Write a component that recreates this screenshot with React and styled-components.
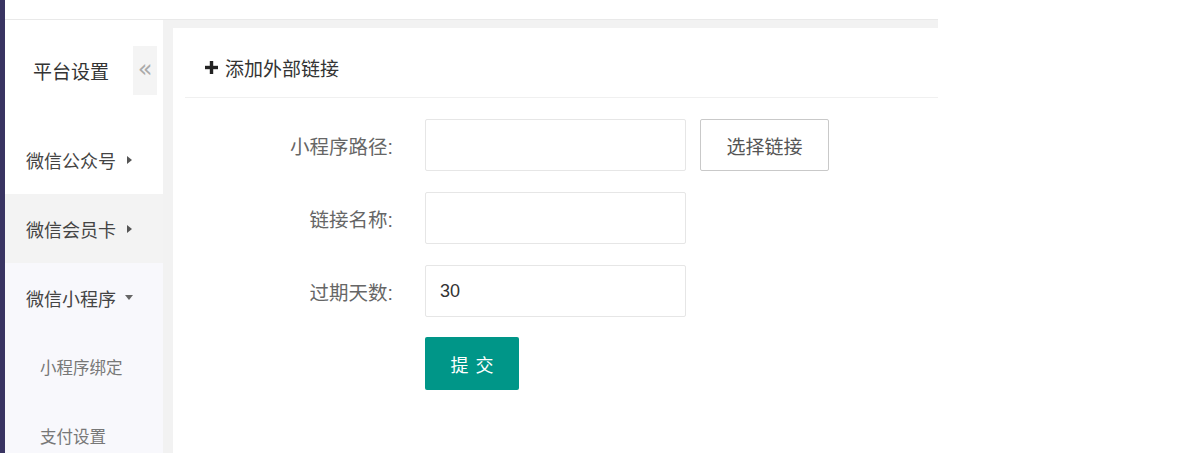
import styled, { createGlobalStyle } from "styled-components";

const GlobalStyle = createGlobalStyle`
    html, body {
        margin: 0;
        padding: 0;
        background: #fff;
    }
    body {
        font-family: "Liberation Sans", "Noto Sans CJK SC", sans-serif;
        color: #333;
    }
    * {
        box-sizing: border-box;
    }
`;

const Page = styled.div`
    display: flex;
    height: 453px;
    overflow: hidden;
`;
const DarkBar = styled.div`
    width: 5px;
    background: #393462;
    flex-shrink: 0;
`;
const Main = styled.div`
    width: 933px;
    display: flex;
    flex-direction: column;
`;
const TopBar = styled.div`
    height: 20px;
    background: #fff;
    border-bottom: 1px solid #e9e9e9;
    flex-shrink: 0;
`;
const Body = styled.div`
    flex: 1;
    display: flex;
    min-height: 0;
`;
const Sidebar = styled.div`
    width: 158px;
    background: #fff;
    display: flex;
    flex-direction: column;
    flex-shrink: 0;
    overflow: hidden;
`;
const SideHead = styled.div`
    display: flex;
    align-items: flex-start;
    padding: 26px 6px 0 28px;
    height: 105px;
    flex-shrink: 0;
`;
const SideTitle = styled.div`
    font-size: 19px;
    color: #333;
    line-height: 49px;
    padding-top: 2px;
`;
const Collapse = styled.div`
    margin-left: auto;
    width: 24px;
    height: 49px;
    background: #f4f4f4;
    color: #aaa;
    font-family: "DejaVu Sans", sans-serif;
    font-size: 24px;
    display: flex;
    align-items: center;
    justify-content: center;
    padding-bottom: 3px;
`;
const MenuItem = styled.div`
    height: 69px;
    flex-shrink: 0;
    display: flex;
    align-items: center;
    gap: 9px;
    padding-left: ${(props) => (props.sub ? "35px" : "21px")};
    font-size: ${(props) => (props.sub ? "16.5px" : "18px")};
    color: ${(props) => (props.sub ? "#777" : "#444")};
    background: ${(props) => props.bg || "#fff"};
`;
const ArrowRight = styled.span`
    width: 0;
    height: 0;
    border-top: 4px solid transparent;
    border-bottom: 4px solid transparent;
    border-left: 5px solid #555;
    margin-left: 2px;
`;
const ArrowDown = styled.span`
    width: 0;
    height: 0;
    border-left: 4.5px solid transparent;
    border-right: 4.5px solid transparent;
    border-top: 5px solid #666;
`;
const Content = styled.div`
    flex: 1;
    background: #f2f2f2;
    padding: 8px 0 0 10px;
    display: flex;
`;
const Card = styled.div`
    flex: 1;
    background: #fff;
    padding-left: 12px;
`;
const CardHead = styled.div`
    height: 70px;
    border-bottom: 1px solid #f0f0f0;
    display: flex;
    align-items: center;
    gap: 7px;
    padding: 10px 0 0 20px;
    font-size: 19px;
    color: #333;
`;
const Form = styled.div`
    padding-top: 21px;
    display: grid;
    grid-template-columns: 210px 261px auto;
    column-gap: 30px;
    row-gap: 21px;
    justify-content: start;
    align-items: center;
`;
const Label = styled.div`
    text-align: right;
    font-size: 19.5px;
    color: #666;
    padding-right: 2px;
`;
const Input = styled.div`
    height: 52px;
    border: 1px solid #e6e6e6;
    border-radius: 2px;
    padding-left: 14px;
    display: flex;
    align-items: center;
    font-size: 18px;
    color: #333;
`;
const Extra = styled.div`
    margin-left: -16px;
`;
const LinkButton = styled.div`
    width: 129px;
    height: 52px;
    border: 1px solid #c9c9c9;
    border-radius: 2px;
    display: flex;
    align-items: center;
    justify-content: center;
    font-size: 19px;
    color: #555;
`;
const Submit = styled.div`
    width: 94px;
    height: 53px;
    margin-top: -1px;
    background: #009688;
    border-radius: 2px;
    color: #fff;
    font-size: 18px;
    display: flex;
    align-items: center;
    justify-content: center;
    letter-spacing: 7px;
    padding-left: 7px;
`;

const Plus = () => (
    <svg width="13" height="13" viewBox="0 0 13 13">
        <rect x="4.8" y="0" width="3.4" height="13" fill="#222" />
        <rect x="0" y="4.8" width="13" height="3.4" fill="#222" />
    </svg>
);

const App = () => {
    return (
        <Page>
            <GlobalStyle />
            <DarkBar />
            <Main>
                <TopBar />
                <Body>
                    <Sidebar>
                        <SideHead>
                            <SideTitle>平台设置</SideTitle>
                            <Collapse>«</Collapse>
                        </SideHead>
                        <MenuItem>微信公众号<ArrowRight /></MenuItem>
                        <MenuItem bg="#f3f3f3">微信会员卡<ArrowRight /></MenuItem>
                        <MenuItem bg="#f8f8fc">微信小程序<ArrowDown /></MenuItem>
                        <MenuItem sub bg="#f8f8fc">小程序绑定</MenuItem>
                        <MenuItem sub bg="#f8f8fc">支付设置</MenuItem>
                    </Sidebar>
                    <Content>
                        <Card>
                            <CardHead><Plus />添加外部链接</CardHead>
                            <Form>
                                <Label>小程序路径:</Label>
                                <Input />
                                <Extra><LinkButton>选择链接</LinkButton></Extra>

                                <Label>链接名称:</Label>
                                <Input />
                                <div />

                                <Label>过期天数:</Label>
                                <Input>30</Input>
                                <div />

                                <div />
                                <Submit>提交</Submit>
                                <div />
                            </Form>
                        </Card>
                    </Content>
                </Body>
            </Main>
        </Page>
    );
};

export default App;
